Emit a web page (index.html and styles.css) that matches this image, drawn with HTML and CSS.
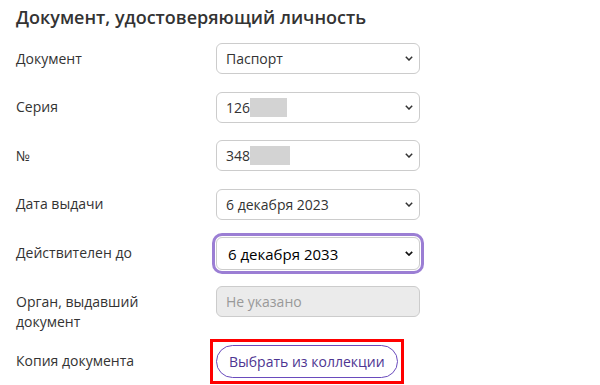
FILE: index.html
```html
<!DOCTYPE html>
<html lang="ru">
<head>
<meta charset="utf-8">
<link rel="stylesheet" href="styles.css">
</head>
<body>
<section class="doc">
  <h2 class="title">Документ, удостоверяющий личность</h2>
  <div class="form">
    <div class="row">
      <div class="label">Документ</div>
      <div class="select"><span>Паспорт</span><svg class="chev" width="8" height="5" viewBox="0 0 8 5"><path d="M0.8 0.8 L4 4 L7.2 0.8" fill="none" stroke="#333" stroke-width="1.5"/></svg></div>
    </div>
    <div class="row">
      <div class="label">Серия</div>
      <div class="select"><span>126</span><i class="mask"></i><svg class="chev" width="8" height="5" viewBox="0 0 8 5"><path d="M0.8 0.8 L4 4 L7.2 0.8" fill="none" stroke="#333" stroke-width="1.5"/></svg></div>
    </div>
    <div class="row">
      <div class="label">№</div>
      <div class="select"><span>348</span><i class="mask wide"></i><svg class="chev" width="8" height="5" viewBox="0 0 8 5"><path d="M0.8 0.8 L4 4 L7.2 0.8" fill="none" stroke="#333" stroke-width="1.5"/></svg></div>
    </div>
    <div class="row">
      <div class="label">Дата выдачи</div>
      <div class="select"><span>6 декабря 2023</span><svg class="chev" width="8" height="5" viewBox="0 0 8 5"><path d="M0.8 0.8 L4 4 L7.2 0.8" fill="none" stroke="#333" stroke-width="1.5"/></svg></div>
    </div>
    <div class="row">
      <div class="label">Действителен до</div>
      <div class="select focused"><span>6 декабря 2033</span><svg class="chev" width="8" height="5" viewBox="0 0 8 5"><path d="M0.8 0.8 L4 4 L7.2 0.8" fill="none" stroke="#111" stroke-width="1.7"/></svg></div>
    </div>
    <div class="row row-top">
      <div class="label">Орган, выдавший<br>документ</div>
      <div class="input disabled">Не указано</div>
    </div>
    <div class="row row-btn">
      <div class="label">Копия документа</div>
      <div class="highlight"><button class="pick">Выбрать из коллекции</button></div>
    </div>
  </div>
</section>
</body>
</html>
```
FILE: styles.css
```css
html, body {
  margin: 0;
  padding: 0;
  background: #fff;
}
body {
  font-family: "Open Sans", "Liberation Sans", sans-serif;
  color: #333;
}
.doc {
  padding: 0 16px;
}
.title {
  margin: 0;
  padding-top: 5px;
  font-size: 18px;
  font-weight: 600;
  line-height: 25px;
  color: #333;
}
.form {
  display: flex;
  flex-direction: column;
  gap: 17.6px;
  margin-top: 13px;
}
.row {
  display: grid;
  grid-template-columns: 200px 204px;
  align-items: center;
}
.row-top {
  align-items: start;
}
.row-top .label {
  padding-top: 6px;
  margin-bottom: -15px;
}
.row-btn {
  margin-top: 4.4px;
}
.label {
  font-size: 14px;
  line-height: 20px;
  color: #333;
}
.select, .input {
  box-sizing: border-box;
  height: 31px;
  border: 1px solid #ccc;
  border-radius: 6px;
  background: #fff;
  display: flex;
  align-items: center;
  padding: 0 6px 0 9px;
  font-size: 14px;
  color: #333;
}
.select span {
  white-space: nowrap;
}
.chev {
  margin-left: auto;
}
.mask {
  display: block;
  width: 37px;
  height: 19px;
  background: #d3d3d3;
}
.mask.wide {
  width: 40px;
}
.select.focused {
  height: 33px;
  margin-bottom: -2px;
  padding-left: 11px;
  font-size: 15px;
  color: #000;
  box-shadow: 0 0 0 1px #fff, 0 0 0 4px #9b7ed4;
}
.input.disabled {
  background: #ebebeb;
  color: #999;
}
.highlight {
  justify-self: start;
  margin-left: -6px;
  padding: 3px;
  border: 3px solid #f00;
}
.pick {
  display: block;
  height: 33px;
  padding: 0 12px;
  border: 1px solid #6a4bbd;
  border-radius: 17px;
  background: #fff;
  color: #4e3591;
  font-family: "Open Sans", "Liberation Sans", sans-serif;
  font-size: 14px;
}
```
